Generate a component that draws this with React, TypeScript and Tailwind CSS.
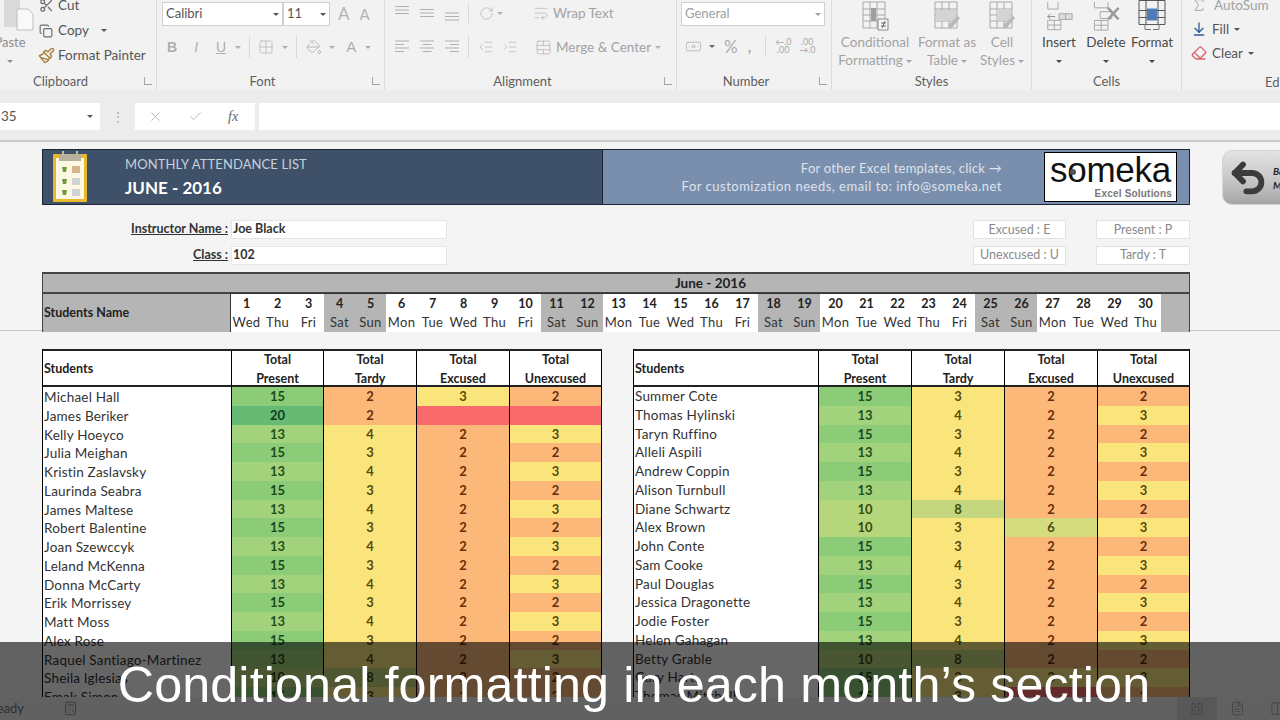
import React from "react";
import {
  ArrowDownToLine, Check, Copy, Eraser, Grid2x2, IndentDecrease, IndentIncrease,
  PaintBucket, Paintbrush, Scissors, Sigma, TableCellsMerge, Undo2, WrapText, X, Calculator, LayoutGrid, FileText, Columns2,
  RotateCw, Banknote,
} from "lucide-react";

type Row = [string, number | null, number | null, number | null, number | null];

const leftRows: Row[] = [
  ["Michael Hall", 15, 2, 3, 2], ["James Beriker", 20, 2, null, null], ["Kelly Hoeyco", 13, 4, 2, 3], ["Julia Meighan", 15, 3, 2, 2],
  ["Kristin Zaslavsky", 13, 4, 2, 3], ["Laurinda Seabra", 15, 3, 2, 2], ["James Maltese", 13, 4, 2, 3], ["Robert Balentine", 15, 3, 2, 2],
  ["Joan Szewccyk", 13, 4, 2, 3], ["Leland McKenna", 15, 3, 2, 2], ["Donna McCarty", 13, 4, 2, 3], ["Erik Morrissey", 15, 3, 2, 2],
  ["Matt Moss", 13, 4, 2, 3], ["Alex Rose", 15, 3, 2, 2], ["Raquel Santiago-Martinez", 13, 4, 2, 3], ["Sheila Iglesias", 10, 8, 2, 2],
  ["Emak Simon", 15, 3, 2, 2],
];
const rightRows: Row[] = [
  ["Summer Cote", 15, 3, 2, 2], ["Thomas Hylinski", 13, 4, 2, 3], ["Taryn Ruffino", 15, 3, 2, 2], ["Alleli Aspili", 13, 4, 2, 3],
  ["Andrew Coppin", 15, 3, 2, 2], ["Alison Turnbull", 13, 4, 2, 3], ["Diane Schwartz", 10, 8, 2, 2], ["Alex Brown", 10, 3, 6, 3],
  ["John Conte", 15, 3, 2, 2], ["Sam Cooke", 13, 4, 2, 3], ["Paul Douglas", 15, 3, 2, 2], ["Jessica Dragonette", 13, 4, 2, 3],
  ["Jodie Foster", 15, 3, 2, 2], ["Helen Gahagan", 13, 4, 2, 3], ["Betty Grable", 10, 8, 2, 2], ["Gary Hart", 15, 3, 3, 3],
  ["Thomas Mitchell", 15, 3, null, 2],
];

const tone = (v: number | null): string => {
  if (v === null) return "bg-[#f8696b] text-transparent";
  if (v === 20) return "bg-[#66ba74] text-[#123d1c]";
  if (v === 15) return "bg-[#8ccb78] text-[#1c4a1c]";
  if (v === 13) return "bg-[#a3d27c] text-[#24501c]";
  if (v === 10) return "bg-[#b6d67c] text-[#3a4a10]";
  if (v === 8) return "bg-[#c5d77e] text-[#3f4a10]";
  if (v === 6) return "bg-[#d3dd7f] text-[#4a4a10]";
  if (v === 4 || v === 3) return "bg-[#fae57d] text-[#5a4a08]";
  return "bg-[#fbb878] text-[#6b2c08]";
};

const days = ["Wed", "Thu", "Fri", "Sat", "Sun", "Mon", "Tue"];

const Caret = ({ className = "" }: { className?: string }) => (
  <span className={`inline-block w-0 h-0 border-x-[3px] border-x-transparent border-t-[3px] border-t-current align-middle ${className}`} />
);

function Group({ w, label, launcher, labelPad = "", children }: { w: string; label: string; launcher?: boolean; labelPad?: string; children: React.ReactNode }) {
  return (
    <div className={`${w} shrink-0 flex flex-col border-r border-[#dcdcdc]`}>
      <div className="h-[72px] overflow-hidden">{children}</div>
      <div className={`h-[18px] pt-[1px] flex items-center justify-center relative text-[13px] text-[#5f5f5f] ${labelPad}`}>
        {label}
        {launcher && <span className="absolute right-[4px] top-[5px] w-[8px] h-[8px] border-l border-b border-[#a5a5a5]" />}
      </div>
    </div>
  );
}

function GridIcon({ className, children }: { className?: string; children?: React.ReactNode }) {
  return (
    <svg viewBox="0 0 32 32" className={className} fill="none" stroke="#a9a9a9" strokeWidth="1">
      <path d="M4 1h22v26H4zM4 8h22M4 14h22M4 20h22M11 1v26M18 1v26" />
      {children}
    </svg>
  );
}

function Lines({ d, className = "" }: { d: string; className?: string }) {
  return (
    <svg viewBox="0 0 16 16" className={`w-[16px] h-[16px] ${className}`} fill="none" stroke="#b0b0b0" strokeWidth="1.1">
      <path d={d} />
    </svg>
  );
}

function StyleBtn({ w, lines, children, dark }: { w: string; lines: string[]; children: React.ReactNode; dark?: boolean }) {
  return (
    <div className={`${w} h-full flex flex-col items-center text-[13.5px] leading-[18px] ${dark ? "text-[#4a4a4a]" : "text-[#a2a2a2]"}`}>
      <div className="h-[33px] w-[34px] flex items-end justify-center">{children}</div>
      <div className="whitespace-nowrap">{lines[0]}</div>
      <div className="whitespace-nowrap">{lines[1]}<Caret className={lines[1] ? "ml-[3px]" : ""} /></div>
    </div>
  );
}

function Table({ rows, grid, dy }: { rows: Row[]; grid: string; dy: string }) {
  const head = ["Present", "Tardy", "Excused", "Unexcused"];
  return (
    <div className="border-x border-black">
      <div className={`${grid} h-[38px] bg-white border-y-2 border-[#222] font-bold text-[12.5px] text-[#222]`}>
        <div className="flex items-center pl-[1px]">Students</div>
        {head.map((h) => (
          <div key={h} className="border-l border-black flex flex-col items-center justify-center leading-[18.5px]">
            <span>Total</span>
            <span>{h}</span>
          </div>
        ))}
      </div>
      {rows.map((r) => (
        <div key={r[0]} className={`${grid} h-[18.75px]`}>
          <div className={`bg-white border-b border-[#dedede] pl-[1px] text-[13.5px] leading-[18px] text-[#333] tracking-[0.2px] whitespace-nowrap ${dy}`}>{r[0]}</div>
          {r.slice(1).map((v, i) => (
            <div key={i} className={`border-l border-black flex items-center justify-center pb-[2px] font-bold text-[13px] ${tone(v as number | null)}`}>
              {v === null ? "" : (v as number)}
            </div>
          ))}
        </div>
      ))}
    </div>
  );
}

const KeyBox = ({ children, w }: { children: string; w: string }) => (
  <div className={`${w} h-[19px] pt-[1px] bg-white border border-[#e2e2e2] flex items-center justify-center text-[12.5px] text-[#8a8a8a]`}>{children}</div>
);

export default function App() {
  return (
    <div className="relative w-[1280px] h-[720px] overflow-hidden flex flex-col bg-[#f4f4f4] font-['Lato',sans-serif]">
      {/* Ribbon */}
      <div className="h-[90px] shrink-0 flex bg-[#f2f2f2] overflow-hidden">
        <Group w="w-[157px]" label="Clipboard" launcher labelPad="pr-[35px]">
          <div className="flex h-full">
            <div className="w-[38px] -ml-[9px] flex flex-col items-center text-[13px] text-[#8f8f8f]">
              <svg viewBox="0 0 30 34" className="w-[30px] h-[34px] ml-[17px] -mt-[1px]">
                <rect x="0" y="-4" width="16" height="32" fill="#dadada" />
                <path d="M13 10h11l5 5v16H13z" fill="#f9f9f9" stroke="#bdbdbd" />
              </svg>
              <span>Paste</span>
              <Caret className="mt-[7px]" />
            </div>
            <div className="ml-[9px] -mt-[7px] text-[13.5px] text-[#555] flex flex-col">
              <div className="h-[25px] flex items-center gap-[4px] pl-[1px]"><Scissors size={15} className="text-[#6d6d6d]" />Cut</div>
              <div className="h-[25px] flex items-center gap-[5px] pl-[1px]"><Copy size={14} className="text-[#6d6d6d]" />Copy<Caret className="ml-[7px]" /></div>
              <div className="h-[25px] flex items-center gap-[3px]"><Paintbrush size={17} className="text-[#a9803a]" />Format Painter</div>
            </div>
          </div>
        </Group>
        <Group w="w-[228px]" label="Font" launcher labelPad="pr-[16px]">
          <div className="pl-[5px] flex flex-col">
            <div className="flex items-center h-[26px] mt-[1px]">
              <div className="w-[121px] h-[24px] bg-white border border-[#d0d0d0] flex items-center justify-between px-[3px] text-[13px] text-[#555]">Calibri<Caret /></div>
              <div className="w-[47px] h-[24px] bg-white border border-[#d0d0d0] flex items-center justify-between px-[3px] text-[13px] text-[#555]">11<Caret /></div>
              <span className="ml-[8px] text-[17px] text-[#b4b4b4]">A</span>
              <span className="ml-[10px] text-[15px] text-[#b4b4b4]">A</span>
            </div>
            <div className="flex items-center h-[24px] mt-[8px] pl-[5px] text-[#adadad] font-['Liberation_Sans',sans-serif]">
              <b className="text-[14px]">B</b>
              <i className="ml-[17px] text-[14px]">I</i>
              <u className="ml-[18px] text-[14px]">U</u>
              <Caret className="ml-[9px]" />
              <span className="ml-[8px] h-[22px] border-l border-[#d9d9d9]" />
              <Grid2x2 size={16} strokeWidth={1} className="ml-[8px]" />
              <Caret className="ml-[8px]" />
              <span className="ml-[8px] h-[22px] border-l border-[#d9d9d9]" />
              <PaintBucket size={16} strokeWidth={1.3} className="ml-[9px]" />
              <Caret className="ml-[7px]" />
              <span className="ml-[11px] text-[15px]">A</span>
              <Caret className="ml-[9px]" />
            </div>
          </div>
        </Group>
        <Group w="w-[292px]" label="Alignment" launcher labelPad="pr-[16px]">
          <div className="pl-[9px] text-[#b0b0b0] flex flex-col">
            <div className="flex items-center h-[26px]">
              <Lines d="M1 1.5h14M1 5h14M1 8.5h14" />
              <Lines d="M1 4.5h14M1 8h14M1 11.5h14" className="ml-[9px]" />
              <Lines d="M1 8h14M1 11.5h14M1 15h14" className="ml-[9px]" />
              <span className="ml-[8px] h-[20px] border-l border-[#d9d9d9]" />
              <RotateCw size={15} strokeWidth={1.2} className="ml-[10px]" />
              <Caret className="ml-[3px]" />
              <WrapText size={16} strokeWidth={1} className="ml-[30px]" />
              <span className="ml-[4px] text-[13.5px] text-[#a2a2a2]">Wrap Text</span>
            </div>
            <div className="flex items-center h-[24px] mt-[9px]">
              <Lines d="M1 2h14M1 5.5h9M1 9h14M1 12.5h9" />
              <Lines d="M1 2h14M3.5 5.5h9M1 9h14M3.5 12.5h9" className="ml-[9px]" />
              <Lines d="M1 2h14M6 5.5h9M1 9h14M6 12.5h9" className="ml-[9px]" />
              <span className="ml-[8px] h-[22px] border-l border-[#d9d9d9]" />
              <IndentDecrease size={16} strokeWidth={1} className="ml-[9px]" />
              <IndentIncrease size={16} strokeWidth={1} className="ml-[8px]" />
              <TableCellsMerge size={17} strokeWidth={1} className="ml-[17px]" />
              <span className="ml-[4px] text-[13.5px] text-[#a2a2a2] whitespace-nowrap">Merge &amp; Center</span>
              <Caret className="ml-[4px]" />
            </div>
          </div>
        </Group>
        <Group w="w-[155px]" label="Number" launcher labelPad="pr-[16px]">
          <div className="pl-[4px] text-[#a9a9a9] flex flex-col">
            <div className="w-[144px] h-[24px] mt-[2px] bg-white border border-[#cfcfcf] flex items-center justify-between px-[3px] text-[13px] text-[#a0a0a0]">General<Caret /></div>
            <div className="flex items-center h-[24px] mt-[8px] pl-[4px]">
              <Banknote size={17} strokeWidth={1} />
              <Caret className="ml-[7px] text-[#666]" />
              <span className="ml-[9px] text-[17px] leading-none">%</span>
              <span className="ml-[10px] text-[15px] font-bold leading-none">,</span>
              <span className="ml-[14px] h-[22px] border-l border-[#d9d9d9]" />
              <span className="ml-[9px] text-[9px] leading-[8px] text-center w-[16px]">←.0<br />.00</span>
              <span className="ml-[8px] text-[9px] leading-[8px] text-center w-[16px]">.00<br />→.0</span>
            </div>
          </div>
        </Group>
        <Group w="w-[200px]" label="Styles">
          <div className="flex h-full">
            <StyleBtn w="w-[86px]" lines={["Conditional", "Formatting"]}>
              <GridIcon className="w-[34px] h-[32px]"><rect x="12" y="7" width="5" height="13" fill="#9f9f9f" stroke="none" /><path d="M19 18h10v11H19z" fill="#f5f5f5" stroke="#888" /><path d="M22 22h5M22 25h5M26 20l-3 7" stroke="#666" /></GridIcon>
            </StyleBtn>
            <StyleBtn w="w-[58px]" lines={["Format as", "Table"]}>
              <GridIcon className="w-[34px] h-[32px]"><path d="M5 9h20v11H5z" fill="#d4d4d4" stroke="none" /><path d="M20 28l9-11-2-2-10 9z" fill="#b9b9b9" stroke="none" /></GridIcon>
            </StyleBtn>
            <StyleBtn w="w-[52px]" lines={["Cell", "Styles"]}>
              <GridIcon className="w-[34px] h-[32px]"><path d="M11 8h14v12H11z" fill="#d4d4d4" stroke="none" /><path d="M20 28l9-11-2-2-10 9z" fill="#b9b9b9" stroke="none" /></GridIcon>
            </StyleBtn>
          </div>
        </Group>
        <Group w="w-[150px]" label="Cells">
          <div className="flex h-full">
            <StyleBtn dark w="w-[54px]" lines={["Insert", ""]}>
              <svg viewBox="0 0 32 32" className="w-[30px] h-[31px]" fill="none" stroke="#a6a6a6"><path d="M4 -2h11v9H4zM4 19h14v10H4zM11 19v10M4 24h14" /><path d="M16 12h14v6H16zM23 12v6" fill="#dedede" /><path d="M12 15H4M7 12l-3 3 3 3" stroke="#888" /></svg>
            </StyleBtn>
            <StyleBtn dark w="w-[40px]" lines={["Delete", ""]}>
              <svg viewBox="0 0 32 32" className="w-[32px] h-[31px]" fill="none" stroke="#a6a6a6"><path d="M4 -2h14v8H4zM4 19h14v10H4zM11 19v10M4 24h14M10 10h12v7H10z" /><path d="M18 6l11 12M29 6L18 18" stroke="#999" strokeWidth="2.5" /></svg>
            </StyleBtn>
            <StyleBtn dark w="w-[52px]" lines={["Format", ""]}>
              <svg viewBox="0 0 32 32" className="w-[32px] h-[33px]" fill="none" stroke="#555"><path d="M3 0h26v24H3zM3 10h26M3 17h26M10 0v24M22 0v24" /><rect x="11" y="8" width="10" height="12" fill="#4f7cb8" stroke="none" /><path d="M9 24v5h6M17 29h6v-5" stroke="#777" /></svg>
            </StyleBtn>
          </div>
        </Group>
        <div className="flex-1 flex flex-col overflow-hidden">
          <div className="h-[72px] -mt-[7px] pl-[9px] text-[13.5px] flex flex-col">
            <div className="h-[25px] flex items-center gap-[7px] text-[#a2a2a2]"><Sigma size={16} strokeWidth={1.5} />AutoSum</div>
            <div className="h-[25px] flex items-center gap-[5px] text-[#555] whitespace-nowrap"><ArrowDownToLine size={16} className="text-[#2f5c96]" />Fill<Caret /></div>
            <div className="h-[25px] flex items-center gap-[5px] text-[#555] whitespace-nowrap"><Eraser size={16} className="text-[#d9616e]" />Clear<Caret /></div>
          </div>
          <div className="h-[18px] mt-[8px] pl-[83px] text-[13px] text-[#5f5f5f]">Ed</div>
        </div>
      </div>

      {/* Formula bar */}
      <div className="h-[52px] shrink-0 flex bg-[#ececec] pt-[13px] border-b-2 border-[#c9c9c9]">
        <div className="w-[100px] h-[27px] bg-white flex items-center justify-between pl-[1px] pr-[7px] text-[13.5px] text-[#555]">35<Caret /></div>
        <div className="w-[35px] h-[27px] flex items-center justify-center text-[#aaa] text-[12px]">⋮</div>
        <div className="w-[120px] h-[27px] bg-white flex items-center text-[#b5b5b5]">
          <X size={15} strokeWidth={1.5} className="ml-[13px]" />
          <Check size={15} strokeWidth={1.5} className="ml-[25px]" />
          <i className="ml-[25px] text-[14px] text-[#666] font-['Liberation_Serif',serif]">fx</i>
        </div>
        <div className="flex-1 h-[27px] ml-[4px] bg-white" />
      </div>

      {/* Sheet */}
      <div className="flex-1 min-h-0 overflow-hidden">
        {/* Frozen pane */}
        <div className="h-[189px] border-b border-[#c4c4c4] pl-[42px] pt-[7px]">
          <div className="flex items-start">
            <div className="w-[1148px] h-[56px] shrink-0 flex border border-[#1c2533] text-[#d7dde6]">
              <div className="w-[560px] flex bg-[#3f5168] border-r border-[#1c2533]">
                <svg viewBox="0 0 36 52" className="ml-[9px] mt-[1px] w-[36px] h-[52px] shrink-0">
                  <rect x="1" y="3" width="34" height="48" rx="1" fill="#e8b92e" />
                  <rect x="4" y="7" width="28" height="41" fill="#fdf7e3" />
                  <rect x="7" y="3" width="22" height="7" fill="#b8b09a" />
                  <path d="M11 0v4M25 0v4" stroke="#c9b98a" strokeWidth="2" />
                  <path d="M10 16h5l-1 5h-3zM10 28h5l-1 5h-3zM10 39h5l-1 5h-3z" fill="#6c9a3c" />
                  <rect x="20" y="15" width="8" height="7" fill="#d9b48c" />
                  <rect x="20" y="27" width="8" height="7" fill="#cfd3d8" />
                  <rect x="20" y="38" width="8" height="7" fill="#cfd3d8" />
                </svg>
                <div className="ml-[37px] pt-[5px]">
                  <div className="text-[13px] leading-[18px] tracking-[0.1px] text-[#c8d0da]">MONTHLY ATTENDANCE LIST</div>
                  <div className="mt-[5px] text-[17px] leading-[20px] font-bold text-white">JUNE - 2016</div>
                </div>
              </div>
              <div className="flex-1 flex bg-[#7a8fad]">
                <div className="w-[399px] text-right text-[13px] tracking-[0.5px] pt-[9px] leading-[18px] text-[#dde3ec] whitespace-nowrap">
                  <div className="tracking-[0.25px]">For other Excel templates, click →</div>
                  <div>For customization needs, email to: info@someka.net</div>
                </div>
                <div className="relative ml-[42px] mt-[2px] w-[133px] h-[50px] bg-white border border-black flex flex-col items-center overflow-hidden font-['Liberation_Sans',sans-serif]">
                  <div className="text-[35px] leading-[37px] text-[#111] tracking-[-0.3px] -mt-[2px]">someka</div>
                  <div className="self-end pr-[4px] text-[10px] leading-[12px] font-bold text-[#777] tracking-[0.2px]">Excel Solutions</div>
                  <span className="absolute left-[25px] top-[16px] w-[6px] h-[6px] rounded-full bg-[#555]" />
                </div>
              </div>
            </div>
            <div className="ml-[32px] w-[80px] h-[55px] shrink-0 mt-[1px] rounded-l-[10px] bg-gradient-to-b from-[#e2e2e2] via-[#cacaca] to-[#a5a5a5] border border-[#d5d5d5] flex items-center">
              <Undo2 size={40} strokeWidth={3.5} className="text-[#3c3c3c] ml-[5px] shrink-0" />
              <i className="ml-[5px] text-[10px] leading-[14px] font-bold text-[#222] whitespace-nowrap">Back<br />Menu</i>
            </div>
          </div>

          <div className="w-[1148px] flex justify-between mt-[15px] text-[12.5px]">
            <div className="flex flex-col gap-[7px]">
              {[["Instructor Name :", "Joe Black"], ["Class :", "102"]].map(([l, v]) => (
                <div key={l} className="flex h-[19px]">
                  <div className="w-[186px] text-right font-bold underline text-[#333] leading-[18px]">{l}</div>
                  <div className="ml-[3px] w-[216px] bg-white border border-[#e6e6e6] pl-[1px] font-bold text-[#333] leading-[16px]">{v}</div>
                </div>
              ))}
            </div>
            <div className="flex flex-col gap-[6.5px]">
              <div className="flex gap-[30px]"><KeyBox w="w-[93px]">Excused : E</KeyBox><KeyBox w="w-[94px]">Present : P</KeyBox></div>
              <div className="flex gap-[30px]"><KeyBox w="w-[93px]">Unexcused : U</KeyBox><KeyBox w="w-[94px]">Tardy : T</KeyBox></div>
            </div>
          </div>

          <div className="w-[1148px] h-[60px] mt-[7px] bg-[#b5b5b5] border-x border-t-2 border-[#444]">
            <div className="h-[20px] pl-[189px] border-b-2 border-[#444] text-center font-bold text-[13.5px] leading-[18px] text-[#222]">June - 2016</div>
            <div className="flex h-[38px]">
              <div className="w-[187px] flex items-center pl-[1px] font-bold text-[12.5px] text-[#222]">Students Name</div>
              <div className="grid grid-cols-[repeat(30,31px)] border-l border-t border-[#333] -mt-px">
                {Array.from({ length: 30 }, (_, i) => {
                  const d = days[i % 7];
                  const we = d === "Sat" || d === "Sun";
                  return (
                    <div key={i} className={`flex flex-col items-center text-[#333] ${we ? "bg-[#b5b5b5]" : "bg-white"}`}>
                      <span className="h-[19px] font-bold text-[12.5px] leading-[19px] text-[#222]">{i + 1}</span>
                      <span className="h-[19px] text-[13px] leading-[19px] tracking-[0.3px] whitespace-nowrap">{d}</span>
                    </div>
                  );
                })}
              </div>
            </div>
          </div>
        </div>

        {/* Summary tables */}
        <div className="flex pl-[42px] pt-[18px]">
          <div className="w-[560px]">
            <Table rows={leftRows} grid="grid grid-cols-[188px_92px_93px_93px_92px]" dy="pt-[1px]" />
          </div>
          <div className="w-[557px] ml-[31px]">
            <Table rows={rightRows} grid="grid grid-cols-[184px_93px_93px_93px_92px]" dy="" />
          </div>
        </div>
      </div>

      {/* Status bar */}
      <div className="h-[23px] shrink-0 bg-[#f2f2f2] flex items-center text-[13px] text-[#777]">
        <span className="-ml-[11px]">Ready</span>
        <Calculator size={15} strokeWidth={1.2} className="ml-[39px]" />
        <div className="ml-auto flex items-center text-[#8a8a8a]">
          <div className="w-[40px] h-[23px] bg-[#dcdcdc] flex items-center justify-center"><LayoutGrid size={14} strokeWidth={1} /></div>
          <FileText size={15} strokeWidth={1} className="ml-[13px]" />
          <Columns2 size={15} strokeWidth={1} className="ml-[25px] -mr-[5px]" />
        </div>
      </div>

      {/* Video caption */}
      <div className="absolute left-0 right-0 bottom-0 h-[78px] bg-black/60 flex justify-center pr-[12px]">
        <span className="mt-[13px] text-[50.3px] leading-[60px] text-white font-['Liberation_Sans',sans-serif] tracking-[0.1px] whitespace-nowrap">
          Conditional formatting in each month’s section
        </span>
      </div>
    </div>
  );
}
